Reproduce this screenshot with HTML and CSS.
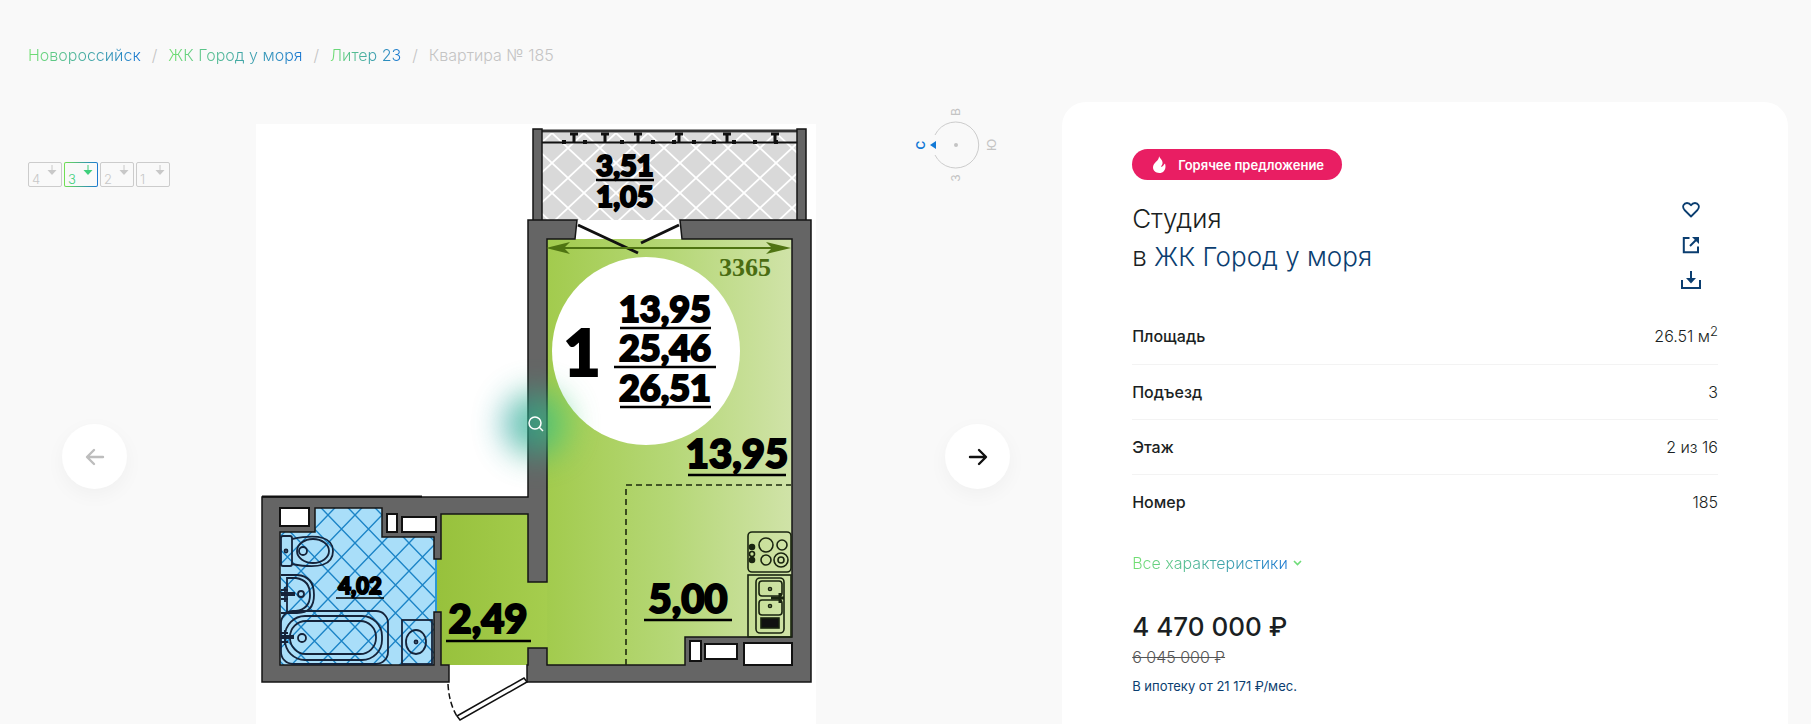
FILE: index.html
```html
<!DOCTYPE html>
<html lang="ru">
<head>
    <meta charset="UTF-8">
    <meta name="viewport" content="width=device-width, initial-scale=1.0">
    <title>Квартира № 185</title>
    <link rel="stylesheet" href="styles.css">
</head>
<body>
    <nav class="breadcrumbs">
        <a href="#">Новороссийск</a>
        <span class="separator">/</span>
        <a href="#">ЖК Город у моря</a>
        <span class="separator">/</span>
        <a href="#">Литер 23</a>
        <span class="separator">/</span>
        <span class="current">Квартира № 185</span>
    </nav>

    <main class="flat">
        <section class="gallery">
            <div class="side side-left">
                <div class="side-top entrances">
                    <button class="entrance">
                        <span>4</span>
                        <svg width="10" height="11" viewBox="0 0 10 11"><path d="M5 0V6" stroke="currentColor"/><path d="M0.500 5H9.500L5 10Z" fill="currentColor"/></svg>
                    </button>
                    <button class="entrance active">
                        <span>3</span>
                        <svg width="10" height="11" viewBox="0 0 10 11"><path d="M5 0V6" stroke="currentColor"/><path d="M0.500 5H9.500L5 10Z" fill="currentColor"/></svg>
                    </button>
                    <button class="entrance">
                        <span>2</span>
                        <svg width="10" height="11" viewBox="0 0 10 11"><path d="M5 0V6" stroke="currentColor"/><path d="M0.500 5H9.500L5 10Z" fill="currentColor"/></svg>
                    </button>
                    <button class="entrance">
                        <span>1</span>
                        <svg width="10" height="11" viewBox="0 0 10 11"><path d="M5 0V6" stroke="currentColor"/><path d="M0.500 5H9.500L5 10Z" fill="currentColor"/></svg>
                    </button>
                </div>
                <button class="arrow" aria-label="Назад" disabled>
                    <svg width="20" height="18" viewBox="0 0 20 18"><path d="M18 9H3M9 2L2 9l7 7" fill="none" stroke="currentColor" stroke-width="2.400" stroke-linecap="round" stroke-linejoin="round"/></svg>
                </button>
            </div>

            <div class="plan">
                <svg class="plan-image" viewBox="256 124 560 600">
                    <defs>
                        <pattern id="tile-gray" x="552" y="133" width="32" height="30" patternUnits="userSpaceOnUse">
                            <rect width="32" height="30" fill="#d9d9d9"/>
                            <path d="M0 0L32 30M32 0L0 30" stroke="#fff" stroke-width="1.800"/>
                        </pattern>
                        <pattern id="tile-blue" x="355" y="515" width="27" height="28" patternUnits="userSpaceOnUse">
                            <rect width="27" height="28" fill="#a9def9"/>
                            <path d="M0 0L27 28M27 0L0 28" stroke="#1b84c7" stroke-width="1.400"/>
                        </pattern>
                        <linearGradient id="room" x1="0" x2="1" y1="0" y2="0">
                            <stop offset="0" stop-color="#a2cb4d"/>
                            <stop offset="0.500" stop-color="#b5d776"/>
                            <stop offset="1" stop-color="#d0e3a8"/>
                        </linearGradient>
                        <linearGradient id="hall" x1="0" x2="1" y1="0" y2="0">
                            <stop offset="0" stop-color="#97c13c"/>
                            <stop offset="1" stop-color="#a5cd4e"/>
                        </linearGradient>
                    </defs>

                    <!-- floors -->
                    <rect x="542" y="133" width="255" height="87" fill="url(#tile-gray)"/>
                    <rect x="546" y="239" width="246" height="426" fill="url(#room)"/>
                    <rect x="436" y="514" width="111" height="151" fill="url(#hall)"/>
                    <path d="M280 532H315V508H382V537H435V665H280Z" fill="url(#tile-blue)"/>
                    <path d="M436 559V612" stroke="#2b97d6" stroke-width="2"/>

                    <!-- balcony -->
                    <g fill="none" stroke="#111">
                        <path d="M542 131H797" stroke="#333" stroke-width="3"/>
                        <path d="M542 142.500H797" stroke-width="2"/>
                        <path d="M574 133v9M605 133v9M638 133v9M679 133v9M727 133v9M775 133v9" stroke-width="3"/>
                        <path d="M570 134h8M601 134h8M634 134h8M675 134h8M723 134h8M771 134h8" stroke-width="3"/>
                        <path d="M562 142h4M583 142h4M620 142h4M651 142h4M672 142h4M692 142h4M712 142h4M732 142h4M753 142h4M774 142h4" stroke-width="4"/>
                    </g>

                    <!-- walls -->
                    <g fill="#656565" stroke="#151515" stroke-width="1.500">
                        <rect x="533" y="129" width="9" height="92"/>
                        <rect x="797" y="129" width="9" height="92"/>
                        <path d="M528 220H577L575 239H547V582H528V514H441V559H434V537H382V508H315V532H280V665H434V612H441V665H449V682H262V497H528Z"/>
                        <path d="M528 648H547V665H685V637H792V239H682L680 220H811V682H527V665H528Z"/>
                    </g>
                    <path d="M262 496.500H422" stroke="#111" stroke-width="2"/>

                    <!-- shafts -->
                    <g fill="#fff" stroke="#111" stroke-width="2">
                        <rect x="280" y="508" width="29" height="18"/>
                        <rect x="387" y="514" width="10" height="18"/>
                        <rect x="402" y="517" width="34" height="15"/>
                        <rect x="690" y="641" width="11" height="20"/>
                        <rect x="705" y="644" width="32" height="15"/>
                        <rect x="744" y="643" width="48" height="22"/>
                    </g>

                    <!-- doors -->
                    <path d="M578 225L638 253M679 225L641 243" stroke="#111" stroke-width="3"/>
                    <path d="M448 684Q449 704 458 718" fill="none" stroke="#111" stroke-width="1.500" stroke-dasharray="6 3"/>
                    <path d="M457 716L524 678L527 682L460 720Z" fill="#fff" stroke="#111" stroke-width="1.500"/>

                    <!-- kitchen zone -->
                    <path d="M626 665V485H791" fill="none" stroke="#1d2a0c" stroke-width="1.600" stroke-dasharray="6 4"/>

                    <!-- bathroom fixtures -->
                    <g fill="none" stroke="#15233a" stroke-width="1.800">
                        <rect x="281" y="536" width="11" height="30" rx="2"/>
                        <circle cx="286" cy="551" r="1.500"/>
                        <path d="M292 539Q333 531 333 551Q333 572 292 564"/>
                        <ellipse cx="313" cy="551" rx="16" ry="12"/>
                        <circle cx="303" cy="551" r="4"/>
                        <path d="M281 575H297Q314 576 314 595Q314 613 297 613H281"/>
                        <path d="M287 577V612M287 578H296Q310 580 310 595Q310 609 296 611"/>
                        <circle cx="301" cy="594" r="3"/>
                        <path d="M281 594H295M281 637H294" stroke-width="4"/>
                        <path d="M285 587V602M281 590H288M281 599H288M285 630V645M281 633H288M281 642H288"/>
                        <rect x="281" y="611" width="107" height="53" rx="12"/>
                        <rect x="285" y="616" width="97" height="44" rx="20"/>
                        <rect x="290" y="621" width="86" height="33" rx="16"/>
                        <circle cx="302" cy="638" r="4"/>
                        <rect x="402" y="620" width="30" height="44"/>
                        <ellipse cx="416" cy="642" rx="10" ry="12"/>
                        <circle cx="416" cy="642" r="1.500"/>
                    </g>

                    <!-- hob and sink -->
                    <g fill="none" stroke="#1a2510" stroke-width="1.600">
                        <rect x="748" y="532" width="43" height="40" rx="4"/>
                        <circle cx="766" cy="545" r="7"/>
                        <circle cx="782" cy="545" r="5"/>
                        <circle cx="766" cy="560" r="5"/>
                        <circle cx="781" cy="560" r="7"/>
                        <circle cx="781" cy="560" r="3"/>
                        <circle cx="752" cy="547" r="2.500" fill="#1a2510"/>
                        <circle cx="752" cy="554" r="2.500"/>
                        <circle cx="752" cy="560" r="2.500" fill="#1a2510"/>
                        <rect x="748" y="575" width="43" height="62"/>
                        <rect x="756" y="578" width="28" height="55" rx="4"/>
                        <rect x="759" y="581" width="23" height="15" rx="3"/>
                        <rect x="759" y="600" width="23" height="15" rx="3"/>
                        <circle cx="770" cy="589" r="1.500"/>
                        <circle cx="770" cy="606" r="1.500"/>
                        <path d="M771 598H784M780 593v10" stroke-width="3"/>
                        <rect x="761" y="618" width="18" height="10" fill="#111"/>
                    </g>

                    <!-- dimension line -->
                    <path d="M552 248H786" stroke="#4f7412" stroke-width="2"/>
                    <path d="M546 248L570 242L564 248L570 254ZM791 248L766 242L772 248L766 254Z" fill="#4f7412"/>
                    <text class="dimension" x="745" y="276">3365</text>

                    <circle cx="646" cy="351" r="94" fill="#fff"/>

                    <g stroke="#000" stroke-width="2.500">
                        <path d="M596 180H654M620 328H711M614 367H716M620 407H711M688 475H786M644 620H732M446 641H531"/>
                        <path d="M336 598H384" stroke-width="1.500"/>
                    </g>
                    <g class="areas">
                        <text class="area-small" x="625" y="176">3,51</text>
                        <text class="area-small" x="625" y="207">1,05</text>
                        <text class="area-count" x="582" y="376">1</text>
                        <text class="area" x="665" y="322">13,95</text>
                        <text class="area" x="665" y="361">25,46</text>
                        <text class="area" x="665" y="401">26,51</text>
                        <text class="area-big" x="737" y="468">13,95</text>
                        <text class="area-big" x="688" y="613">5,00</text>
                        <text class="area-big" x="488" y="633">2,49</text>
                        <text class="area-tiny" x="360" y="594">4,02</text>
                    </g>
                </svg>
                <button class="loupe" aria-label="Увеличить">
                    <svg width="16" height="16" viewBox="0 0 16 16"><circle cx="7" cy="7" r="6" fill="none" stroke="currentColor" stroke-width="1.500"/><path d="M11 11l4 4" stroke="currentColor" stroke-width="1.500"/></svg>
                </button>
            </div>

            <div class="side side-right">
                <div class="side-top">
                    <svg class="compass" width="84" height="86" viewBox="0 0 84 86">
                        <path d="M21 33A23 23 0 1 1 21 53" fill="none" stroke="#ccc"/>
                        <circle cx="42" cy="43" r="2" fill="#c4c4c4"/>
                        <path d="M16 43L22 39V47Z" fill="#1279d6"/>
                        <g class="compass-letters">
                            <text class="north" transform="translate(11 43) rotate(-90)">С</text>
                            <text transform="translate(46 10) rotate(-90)">В</text>
                            <text transform="translate(82 43) rotate(-90)">Ю</text>
                            <text transform="translate(46 76) rotate(-90)">З</text>
                        </g>
                    </svg>
                </div>
                <button class="arrow" aria-label="Вперёд">
                    <svg width="20" height="18" viewBox="0 0 20 18"><path d="M2 9H17M11 2l7 7l-7 7" fill="none" stroke="currentColor" stroke-width="2.400" stroke-linecap="round" stroke-linejoin="round"/></svg>
                </button>
            </div>
        </section>

        <section class="card">
            <div class="badge">
                <svg width="13" height="17" viewBox="0 0 13 17"><path d="M6 0C7 3 10 4 9.500 7.500C9.300 9 8.300 9.500 8 11C10 10.500 10.500 9 12 7.500C13.500 12 11.500 17 6.300 17C2.500 17 0 14.500 0 11.300C0 6.500 6.500 5 6 0Z" fill="#fff"/></svg>
                <span>Горячее предложение</span>
            </div>

            <div class="card-head">
                <h1>Студия<br>в <a href="#">ЖК Город у моря</a></h1>
                <div class="actions">
                    <button aria-label="В избранное">
                        <svg width="18" height="16" viewBox="0 0 18 16"><path d="M9 14.500L2.500 8C-0.500 4.500 2 1 5 1C7 1 8.300 2.200 9 3.300C9.700 2.200 11 1 13 1C16 1 18.500 4.500 15.500 8Z" fill="none" stroke="currentColor" stroke-width="1.800" stroke-linejoin="round"/></svg>
                    </button>
                    <button aria-label="Поделиться">
                        <svg width="18" height="18" viewBox="0 0 18 18"><path d="M7.500 2H1.800V16.200H16V10.500" fill="none" stroke="currentColor" stroke-width="2"/><path d="M8 10L14 4" stroke="currentColor" stroke-width="2"/><path d="M10 1H17V8Z" fill="currentColor"/></svg>
                    </button>
                    <button aria-label="Скачать">
                        <svg width="20" height="18" viewBox="0 0 20 18"><path d="M1 9V17H19V9" fill="none" stroke="currentColor" stroke-width="2"/><path d="M10 0V8" stroke="currentColor" stroke-width="2"/><path d="M5 7H15L10 12.500Z" fill="currentColor"/></svg>
                    </button>
                </div>
            </div>

            <table class="params">
                <tr><th scope="row">Площадь</th><td>26.51 м<sup>2</sup></td></tr>
                <tr><th scope="row">Подъезд</th><td>3</td></tr>
                <tr><th scope="row">Этаж</th><td>2 из 16</td></tr>
                <tr><th scope="row">Номер</th><td>185</td></tr>
            </table>

            <button class="more">
                <span>Все характеристики</span>
                <svg width="9" height="6" viewBox="0 0 9 6"><path d="M1 1l3.500 3.500L8 1" fill="none" stroke="#6edc78" stroke-width="1.600"/></svg>
            </button>

            <div class="price">4 470 000 ₽</div>
            <div class="price-old"><s>6 045 000 ₽</s></div>
            <a class="mortgage" href="#">В ипотеку от 21 171 ₽/мес.</a>
        </section>
    </main>
</body>
</html>
```
FILE: styles.css
```css
* {
    box-sizing: border-box;
}

body {
    margin: 0;
    min-height: 100vh;
    display: flex;
    flex-direction: column;
    font-family: Inter, "Noto Sans", sans-serif;
    font-size: 16px;
    color: #1b1f23;
    background-color: #f9f9f9;
}

button {
    padding: 0;
    border: none;
    background: none;
    font: inherit;
    cursor: pointer;
}

svg {
    display: block;
}

a {
    color: #0b3e70;
    text-decoration: none;
}

.breadcrumbs {
    display: flex;
    gap: 11px;
    height: 102px;
    padding: 44px 28px 0;
    font-weight: 300;
    line-height: 22px;
    color: #c4c4c4;
}

.breadcrumbs a,
.more span {
    color: transparent;
    background: linear-gradient(90deg, #72e070, #1a78d2);
    -webkit-background-clip: text;
    background-clip: text;
}

.flat {
    flex: 1;
    display: grid;
    grid-template-columns: minmax(0, 7fr) minmax(0, 5fr);
    gap: 18px;
    padding: 0 23px 0 28px;
}

.gallery {
    display: grid;
    grid-template-columns: 1fr minmax(0, 560px) 1fr;
}

.side {
    display: flex;
    flex-direction: column;
}

.side-right {
    align-items: flex-end;
}

.side-top {
    height: 322px;
}

.entrances {
    display: flex;
    align-items: flex-start;
    gap: 2px;
    padding-top: 60px;
}

.entrance {
    display: flex;
    justify-content: space-between;
    width: 34px;
    height: 25px;
    padding: 2px 4px 0 3px;
    border: 1px solid #ccc;
    border-radius: 2px;
    color: #c8c8c8;
}

.entrance span {
    padding-top: 7px;
    font-size: 13px;
    font-weight: 300;
    line-height: 14px;
}

.entrance.active {
    color: #3fd07c;
    border-color: transparent;
    background: linear-gradient(#f9f9f9, #f9f9f9) padding-box, linear-gradient(90deg, #72e050, #1a78d2) border-box;
}

.arrow {
    display: flex;
    align-items: center;
    justify-content: center;
    width: 65px;
    height: 65px;
    margin: 0 34px;
    border-radius: 50%;
    background-color: #fff;
    color: #111;
    box-shadow: 0 6px 20px rgba(0, 0, 0, 0.04);
}

.arrow:disabled {
    color: #bdbdbd;
}

.compass {
    margin-right: 46px;
}

.compass-letters {
    font-size: 12px;
    fill: #c4c4c4;
    text-anchor: middle;
}

.compass-letters .north {
    font-weight: 600;
    fill: #1279d6;
}

.plan {
    position: relative;
    align-self: start;
    margin-top: 22px;
    background-color: #fff;
}

.plan-image {
    width: 100%;
    height: auto;
}

.areas {
    font-family: Lato, sans-serif;
    font-weight: 900;
    text-anchor: middle;
    stroke: #000;
    stroke-width: 2px;
}

.area-tiny {
    font-size: 22px;
}

.area-small {
    font-size: 29px;
}

.area {
    font-size: 36px;
}

.area-big {
    font-size: 40px;
}

.area-count {
    font-size: 64px;
}

.dimension {
    font-family: "Liberation Serif", serif;
    font-size: 26px;
    font-weight: 700;
    text-anchor: middle;
    fill: #4a6c12;
}

.loupe {
    position: absolute;
    top: 50%;
    left: 50%;
    width: 80px;
    height: 80px;
    transform: translate(-50%, -50%);
    color: #fff;
}

.loupe::before {
    content: "";
    position: absolute;
    inset: 8px;
    border-radius: 50%;
    background: linear-gradient(90deg, #0c8fa0, #4fd873);
    opacity: 0.7;
    filter: blur(16px);
}

.loupe svg {
    position: relative;
    margin: 0 auto;
}

.card {
    padding: 47px 70px 0;
    border-radius: 24px 24px 0 0;
    background-color: #fff;
}

.badge {
    display: inline-flex;
    align-items: center;
    gap: 12px;
    height: 31px;
    padding: 0 18px 0 21px;
    border-radius: 16px;
    background-color: #e91e63;
    color: #fff;
    font-size: 13px;
    font-weight: 600;
}

.card-head {
    display: flex;
    justify-content: space-between;
    margin-top: 18px;
}

h1 {
    margin: 0;
    padding-top: 2px;
    font-size: 26px;
    font-weight: 300;
    line-height: 38px;
}

.actions {
    display: flex;
    flex-direction: column;
    gap: 11px;
    padding-right: 15px;
}

.actions button {
    display: flex;
    align-items: center;
    justify-content: center;
    width: 24px;
    height: 24px;
    color: #0b3e70;
}

.params {
    width: 100%;
    margin-top: 17px;
    border-collapse: collapse;
}

.params th,
.params td {
    height: 55px;
    padding: 0;
    border-bottom: 1px solid #f3f3f3;
    line-height: 20px;
}

.params th {
    font-weight: 500;
    text-align: left;
}

.params td {
    font-weight: 300;
    text-align: right;
}

.params tr:last-child > * {
    border-bottom: none;
}

.params sup {
    font-size: 13px;
    line-height: 0;
}

.more {
    display: flex;
    align-items: center;
    gap: 5px;
    margin-top: 24px;
    font-weight: 300;
    line-height: 20px;
}

.price {
    margin-top: 37px;
    font-size: 26px;
    font-weight: 500;
    line-height: 34px;
}

.price-old {
    margin-top: 2px;
    font-weight: 300;
    line-height: 22px;
    color: #555;
}

.mortgage {
    display: inline-block;
    margin-top: 8px;
    font-size: 13px;
    line-height: 20px;
}
```
